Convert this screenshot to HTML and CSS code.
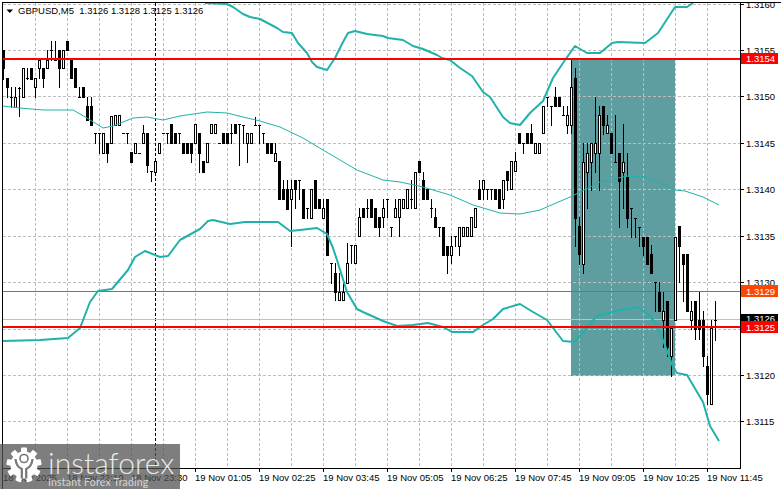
FILE: index.html
```html
<!DOCTYPE html>
<html lang="en">
<head>
<meta charset="utf-8">
<title>GBPUSD,M5</title>
<link rel="stylesheet" href="styles.css">
</head>
<body>
<main class="chart">
<svg class="plot" width="781" height="489" viewBox="0 0 781 489">
  <rect class="signal-box" x="571" y="59" width="104" height="317"/>
  <path class="grid" d="M3 4.5H740M3 50.5H740M3 96.5H740M3 143.5H740M3 189.5H740M3 236.5H740M3 282.5H740M3 329.5H740M3 375.5H740M3 421.5H740"/>
  <path class="grid" d="M35.5 3V468M67.5 3V468M99.5 3V468M131.5 3V468M163.5 3V468M195.5 3V468M227.5 3V468M259.5 3V468M291.5 3V468M323.5 3V468M355.5 3V468M387.5 3V468M419.5 3V468M451.5 3V468M483.5 3V468M515.5 3V468M547.5 3V468M579.5 3V468M611.5 3V468M643.5 3V468M675.5 3V468M707.5 3V468"/>
  <path class="crosshair" d="M155.5 3V468"/>
  <path class="level-gray" d="M3 319.5H740"/>
  <path class="level-orange" d="M3 291.5H740"/>
  <g id="candles"></g>
  <polyline class="band" points="205,3 227,4 233,7 243,14 250,17 260,19 277,28 283,32 292,33 298,43 307,53 312,62 317,67 327,70 335,58 343,42 348,33 355,31 367,34 383,36 388,38 403,40 413,46 423,49 437,55 442,58 450,60 460,68 472,76 483,92 490,97 503,117 510,123 520,125 530,113 543,101 553,78 565,60 575,46 587,53 600,53 612,43 618,42 645,43 658,33 675,7 687,7 693,3"/>
  <polyline class="band-mid" points="3,106 20,108 43,110 73,110 87,118 103,128 113,126 133,118 147,117 163,120 180,116 207,112 227,113 243,117 260,121 280,127 303,138 323,150 357,170 383,180 400,182 423,187 450,195 473,205 500,213 520,214 540,210 570,197 600,182 627,176 647,177 675,190 685,191 703,197 719,205"/>
  <polyline class="band" points="3,341 40,340 68,338 80,328 90,302 98,291 112,289 128,270 135,257 145,251 160,257 168,256 180,240 200,229 208,221 213,220 230,224 245,222 260,222 278,222 290,231 300,230 317,228 327,234 333,248 337,260 347,292 357,309 363,312 383,321 397,326 413,325 428,323 443,327 452,332 473,332 483,325 493,319 503,309 520,304 533,312 547,320 563,341 575,342 588,326 597,316 620,310 637,307 647,313 657,325 660,332 673,367 677,373 687,375 703,402 710,426 719,441"/>
  <path class="level-red" d="M3 59H740M3 327H740"/>
  <path class="frame" d="M2.5 489V2.5H781M740.5 2V468.5M2 468.5H741"/>
  <path class="frame" d="M740 4.5H744M740 50.5H744M740 96.5H744M740 143.5H744M740 189.5H744M740 236.5H744M740 282.5H744M740 375.5H744M740 421.5H744M67.5 468V472M131.5 468V472M195.5 468V472M259.5 468V472M323.5 468V472M387.5 468V472M451.5 468V472M515.5 468V472M579.5 468V472M643.5 468V472M707.5 468V472"/>
  <path class="caret" d="M6.5 9.5H13L9.75 13Z"/>
  <text class="label" x="18" y="14">GBPUSD,M5&#160;&#160;1.3126 1.3128 1.3125 1.3126</text>
  <g class="label">
    <text x="746" y="8">1.3160</text>
    <text x="746" y="54">1.3155</text>
    <text x="746" y="100">1.3150</text>
    <text x="746" y="147">1.3145</text>
    <text x="746" y="193">1.3140</text>
    <text x="746" y="240">1.3135</text>
    <text x="746" y="286">1.3130</text>
    <text x="746" y="379">1.3120</text>
    <text x="746" y="425">1.3115</text>
  </g>
  <rect class="tag-red" x="741" y="53" width="37" height="11"/>
  <text class="tag-text" x="746" y="62">1.3154</text>
  <rect class="tag-orange" x="741" y="285" width="37" height="12"/>
  <text class="tag-text" x="746" y="294.5">1.3129</text>
  <rect class="tag-black" x="741" y="314" width="37" height="10"/>
  <text class="tag-text" x="746" y="322">1.3126</text>
  <rect class="tag-red" x="741" y="321" width="37" height="12"/>
  <text class="tag-text" x="746" y="330.5">1.3125</text>
  <g class="label">
    <text x="3" y="481">18 Nov 2025</text>
    <text x="67" y="481">18 Nov 22:10</text>
    <text x="131" y="481">18 Nov 23:30</text>
    <text x="195" y="481">19 Nov 01:05</text>
    <text x="259" y="481">19 Nov 02:25</text>
    <text x="323" y="481">19 Nov 03:45</text>
    <text x="387" y="481">19 Nov 05:05</text>
    <text x="451" y="481">19 Nov 06:25</text>
    <text x="515" y="481">19 Nov 07:45</text>
    <text x="579" y="481">19 Nov 09:05</text>
    <text x="643" y="481">19 Nov 10:25</text>
    <text x="707" y="481">19 Nov 11:45</text>
  </g>
</svg>
<aside class="watermark">
  <svg class="gear" width="36" height="36" viewBox="0 0 36 36">
    <g class="gear-teeth">
      <rect x="15" y="0.5" width="6" height="6" rx="1"/>
      <rect x="15" y="0.5" width="6" height="6" rx="1" transform="rotate(40 18 18)"/>
      <rect x="15" y="0.5" width="6" height="6" rx="1" transform="rotate(80 18 18)"/>
      <rect x="15" y="0.5" width="6" height="6" rx="1" transform="rotate(120 18 18)"/>
      <rect x="15" y="0.5" width="6" height="6" rx="1" transform="rotate(160 18 18)"/>
      <rect x="15" y="0.5" width="6" height="6" rx="1" transform="rotate(200 18 18)"/>
      <rect x="15" y="0.5" width="6" height="6" rx="1" transform="rotate(240 18 18)"/>
      <rect x="15" y="0.5" width="6" height="6" rx="1" transform="rotate(280 18 18)"/>
      <rect x="15" y="0.5" width="6" height="6" rx="1" transform="rotate(320 18 18)"/>
      <circle cx="18" cy="18" r="13.5"/>
    </g>
    <path class="gear-cut" d="M9.5 12C10 17.5 12.5 20.5 15.8 22V31.5M26.5 12C26 17.5 23.5 20.5 20.2 22V31.5"/>
    <circle class="gear-ring" cx="18" cy="11.5" r="4"/>
  </svg>
  <div class="brand">
    <span class="brand-name">instaforex</span>
    <span class="brand-tag">Instant Forex Trading</span>
  </div>
</aside>
</main>
<script src="chart.js"></script>
</body>
</html>
```

FILE: styles.css
```css
html, body {
  margin: 0;
  padding: 0;
  background: #fff;
}
.chart {
  position: relative;
  width: 781px;
  height: 489px;
  overflow: hidden;
}
.plot {
  display: block;
}
.plot text {
  font-family: "Liberation Sans", Arial, sans-serif;
  font-size: 9.5px;
}
.label {
  fill: #000;
}
.signal-box {
  fill: #5f9ea0;
}
.grid {
  fill: none;
  stroke: #bdbdbd;
  stroke-width: 1;
  stroke-dasharray: 3 2;
  shape-rendering: crispEdges;
}
.crosshair {
  fill: none;
  stroke: #000;
  stroke-width: 1;
  stroke-dasharray: 3 2;
  shape-rendering: crispEdges;
}
.level-gray {
  stroke: #c0c0c0;
  shape-rendering: crispEdges;
}
.level-orange {
  stroke: #ff4500;
  shape-rendering: crispEdges;
}
.level-red {
  stroke: #ff0000;
  stroke-width: 2;
  shape-rendering: crispEdges;
}
.band {
  fill: none;
  stroke: #20b2aa;
  stroke-width: 2;
  stroke-linejoin: round;
}
.band-mid {
  fill: none;
  stroke: #20b2aa;
  stroke-width: 1;
}
.frame {
  fill: none;
  stroke: #000;
  stroke-width: 1;
  shape-rendering: crispEdges;
}
.caret {
  fill: #000;
}
.wick {
  stroke: #000;
  stroke-width: 1;
  fill: none;
  shape-rendering: crispEdges;
}
.body-black {
  fill: #000;
  shape-rendering: crispEdges;
}
.body-white {
  fill: #fff;
  stroke: #000;
  stroke-width: 1;
  shape-rendering: crispEdges;
}
.tag-red {
  fill: #ff0000;
}
.tag-orange {
  fill: #ff4500;
}
.tag-black {
  fill: #000;
}
.plot .tag-text {
  fill: #fff;
}
.watermark {
  position: absolute;
  left: 0;
  top: 444px;
  width: 180px;
  height: 45px;
  display: flex;
  align-items: flex-start;
  gap: 6px;
  padding: 3px 0 0 6px;
  box-sizing: border-box;
  background: rgba(81, 81, 81, 0.74);
}
.gear-teeth {
  fill: #fff;
}
.gear-cut {
  fill: none;
  stroke: #777;
  stroke-width: 2.2;
}
.gear-ring {
  fill: #fff;
  stroke: #777;
  stroke-width: 1.6;
}
.brand {
  display: flex;
  flex-direction: column;
  color: rgba(255, 255, 255, 0.85);
  font-family: Lato, "Open Sans", sans-serif;
}
.brand-name {
  font-size: 30px;
  font-weight: 300;
  line-height: 30px;
}
.brand-tag {
  font-size: 10.5px;
  line-height: 10px;
  letter-spacing: 0.2px;
  color: rgba(255, 255, 255, 0.7);
}
```

FILE: chart.js
```js
// high, body top, body bottom, low, kind: 0 black, 1 white, 2 doji
var bars = [
[50,50,68,79,0],[78,78,87,97,0],[87,97,97,107,2],[87,97,107,107,1],[87,88,88,116,2],[68,68,97,97,1],[68,78,78,79,2],[68,68,79,79,0],[78,78,87,97,1],[60,60,68,78,1],
[68,68,78,87,0],[50,60,68,68,1],[41,50,50,60,2],[41,60,60,60,2],[50,50,68,87,0],[50,50,68,68,1],[41,41,50,50,0],[60,60,78,78,0],[68,68,87,87,0],[87,97,97,97,2],
[87,87,97,97,0],[97,106,120,120,0],[97,106,125,125,0],[133,133,133,143,2],[133,133,133,153,2],[133,133,153,153,1],[143,143,153,162,0],[116,116,143,143,1],[115,115,125,125,1],[115,115,125,125,1],
[133,133,133,133,2],[133,133,133,143,2],[152,152,162,162,0],[143,143,153,153,1],[153,153,153,153,2],[125,133,143,143,1],[133,133,165,172,0],[171,171,171,181,2],[161,161,172,172,1],[143,143,153,153,1],
[133,133,133,133,2],[133,133,133,143,2],[124,124,143,143,0],[133,133,143,143,0],[133,133,133,143,2],[143,143,153,153,0],[143,143,153,153,0],[143,143,153,162,0],[124,124,143,143,1],[133,133,153,172,0],
[161,161,172,172,0],[143,143,162,162,1],[124,124,133,133,1],[124,124,133,133,1],[143,143,143,143,2],[133,133,143,143,0],[133,133,143,143,0],[124,133,133,143,2],[124,124,133,133,0],[124,124,124,165,2],
[125,125,125,143,2],[133,133,143,162,1],[133,133,143,143,1],[117,125,125,125,2],[125,125,125,143,2],[133,133,133,143,2],[143,143,153,153,0],[143,143,153,153,0],[143,153,161,161,1],[161,161,199,199,0],
[180,189,199,199,0],[180,189,209,209,0],[180,189,199,246,1],[180,180,189,208,0],[180,180,180,199,2],[189,189,218,218,0],[208,208,208,218,2],[189,189,218,218,1],[180,180,208,208,0],[199,199,208,208,0],
[199,208,218,218,1],[199,199,255,255,0],[263,263,263,283,2],[263,273,292,300,0],[273,292,300,300,1],[283,292,300,300,1],[243,263,283,283,1],[245,245,245,263,2],[245,245,263,263,1],[208,217,236,236,1],
[208,208,217,217,0],[199,208,208,217,2],[199,199,217,217,0],[208,208,227,227,0],[217,217,227,236,0],[199,208,217,227,1],[199,199,199,217,2],[227,227,227,236,2],[199,208,217,217,1],[199,199,217,236,1],
[199,199,208,208,1],[189,189,208,208,1],[180,199,199,208,2],[172,172,208,208,1],[161,161,172,172,0],[172,180,199,199,0],[189,189,199,199,0],[199,208,208,217,2],[208,217,227,227,0],[227,227,227,236,2],
[227,227,255,255,0],[246,246,255,273,0],[236,246,255,263,1],[236,236,236,246,2],[227,227,246,255,1],[227,227,236,236,1],[227,227,236,236,1],[217,217,236,236,1],[208,208,227,227,1],[180,189,199,199,0],
[180,180,189,199,1],[189,189,189,199,2],[189,189,189,199,2],[189,189,199,199,0],[189,189,208,208,0],[180,180,199,208,1],[171,171,180,190,0],[161,161,189,189,1],[152,161,171,171,1],[133,133,143,143,0],
[143,143,143,153,2],[133,133,143,143,0],[124,133,143,143,0],[143,143,153,153,1],[143,143,153,153,1],[106,106,133,133,1],[97,97,97,106,2],[106,106,106,125,2],[87,97,106,106,0],[97,97,106,106,0],
[106,115,115,115,2],[106,115,125,133,1],[59,87,125,133,1],[68,78,218,246,0],[217,226,254,264,0],[143,162,264,273,1],[143,153,172,208,1],[143,143,162,190,1],[97,143,153,172,1],[106,115,153,190,1],
[106,106,125,134,0],[115,125,133,133,1],[133,133,153,153,0],[115,162,162,162,2],[153,153,181,227,0],[124,162,172,208,1],[153,177,218,227,0],[208,208,208,237,2],[218,218,218,237,2],[227,227,227,246,2],
[237,237,246,255,0],[237,237,264,264,0],[245,254,273,273,0],[282,282,282,311,2],[282,292,311,311,0],[292,311,320,347,1],[301,301,347,356,0],[328,328,356,376,1],[237,237,320,320,1],[226,226,246,282,0],
[254,254,264,301,0],[254,254,311,311,0],[301,311,320,329,1],[301,301,329,339,0],[292,320,329,339,0],[311,320,356,366,0],[356,366,394,404,0],[320,328,404,404,1],[301,320,320,340,2]
];
var parts = [];
bars.forEach(function (b, i) {
  var cx = 3.5 + 4 * i;
  var h = b[0], t = b[1], u = b[2], l = b[3], k = b[4];
  parts.push('<path class="wick" d="M' + cx + ' ' + h + 'V' + (l + 1) + '"/>');
  if (k === 0) {
    parts.push('<rect class="body-black" x="' + (cx - 1.5) + '" y="' + t + '" width="3" height="' + (u - t + 1) + '"/>');
  } else if (k === 1) {
    parts.push('<rect class="body-white" x="' + (cx - 1) + '" y="' + (t + 0.5) + '" width="2" height="' + (u - t) + '"/>');
  } else {
    parts.push('<path class="wick" d="M' + (cx - 1.5) + ' ' + (t + 0.5) + 'H' + (cx + 1.5) + '"/>');
  }
});
document.getElementById('candles').innerHTML = parts.join('');
```
